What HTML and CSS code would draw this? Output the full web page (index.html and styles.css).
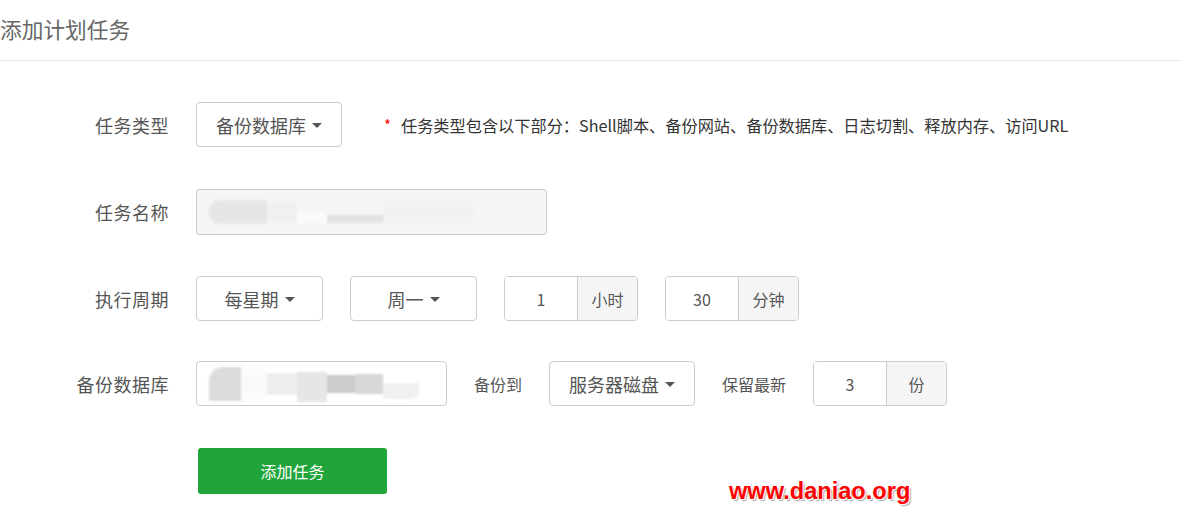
FILE: index.html
```html
<!DOCTYPE html>
<html lang="zh-CN">
<head>
<meta charset="utf-8">
<title>添加计划任务</title>
<link rel="stylesheet" href="styles.css">
</head>
<body>
<div class="page">
  <div class="header"><h1 class="title">添加计划任务</h1></div>
  <div class="form">
    <div class="row">
      <div class="label">任务类型</div>
      <div class="select w146"><span>备份数据库</span><i class="caret"></i></div>
      <div class="hint"><span class="star">*</span><span class="hint-text">任务类型包含以下部分：Shell脚本、备份网站、备份数据库、日志切割、释放内存、访问URL</span></div>
    </div>
    <div class="row">
      <div class="label">任务名称</div>
      <div class="name-input">
        <div class="blur blur-name">
          <span class="b b1"></span><span class="b b2"></span><span class="b b3"></span><span class="b b4"></span><span class="b b5"></span>
        </div>
      </div>
    </div>
    <div class="row row-tight">
      <div class="label">执行周期</div>
      <div class="select w127"><span>每星期</span><i class="caret"></i></div>
      <div class="select w127"><span>周一</span><i class="caret"></i></div>
      <div class="group"><div class="gin">1</div><div class="addon">小时</div></div>
      <div class="group"><div class="gin">30</div><div class="addon">分钟</div></div>
    </div>
    <div class="row">
      <div class="label">备份数据库</div>
      <div class="select w251 dbsel">
        <div class="blur blur-db">
          <span class="d d1"></span><span class="d d2"></span><span class="d d3"></span><span class="d d4"></span><span class="d d5"></span><span class="d d6"></span><span class="d d7"></span>
        </div>
      </div>
      <div class="text">备份到</div>
      <div class="select w146"><span>服务器磁盘</span><i class="caret"></i></div>
      <div class="text">保留最新</div>
      <div class="group"><div class="gin">3</div><div class="addon">份</div></div>
    </div>
    <div class="actions">
      <button class="btn">添加任务</button>
    </div>
  </div>
  <div class="watermark">www.daniao.org</div>
</div>
</body>
</html>
```
FILE: styles.css
```css
html, body {
  margin: 0;
  padding: 0;
  background: #fff;
}
body {
  font-family: "Noto Sans CJK SC", "Microsoft YaHei", sans-serif;
  color: #555;
}
.page {
  position: relative;
  width: 1182px;
  height: 522px;
  overflow: hidden;
}
.header {
  height: 60px;
  border-bottom: 1px solid #e8e8e8;
}
.title {
  margin: 0;
  font-size: 21.7px;
  font-weight: normal;
  line-height: 57px;
  color: #666;
}
.form {
  padding-top: 41px;
}
.row {
  display: flex;
  align-items: center;
  gap: 27px;
  height: 45px;
  margin-bottom: 42px;
}
.row-tight {
  margin-bottom: 40px;
}
.label {
  width: 169px;
  text-align: right;
  font-size: 18px;
  color: #555;
  letter-spacing: 0.5px;
}
.select {
  box-sizing: border-box;
  height: 45px;
  border: 1px solid #ccc;
  border-radius: 4px;
  display: flex;
  align-items: center;
  justify-content: center;
  font-size: 18px;
  color: #555;
  background: #fff;
}
.w146 { width: 146px; }
.w127 { width: 127px; }
.w251 { width: 251px; }
.caret {
  width: 0;
  height: 0;
  border-left: 5px solid transparent;
  border-right: 5px solid transparent;
  border-top: 5px solid #555;
  margin-left: 6px;
  margin-top: 2px;
}
.hint {
  margin-left: 15px;
  display: flex;
  align-items: center;
  font-size: 16.2px;
  color: #333;
}
.star {
  color: #f00;
  font-size: 15px;
  width: 17px;
}
.name-input {
  box-sizing: border-box;
  width: 351px;
  height: 46px;
  border: 1px solid #ccc;
  border-radius: 3px;
  background: #f5f5f5;
  display: flex;
  align-items: center;
  padding-left: 12px;
}
.blur {
  display: flex;
  align-items: center;
  filter: blur(1.2px);
}
.b { display: block; }
.b1 { width: 58px; height: 24px; background: #e6e6e6; border-radius: 10px 0 0 10px; }
.b2 { width: 30px; height: 20px; background: #f0f0f0; }
.b3 { width: 30px; height: 10px; background: #fbfbfb; margin-top: 12px; }
.b4 { width: 56px; height: 8px; background: #e2e2e2; margin-top: 14px; }
.b5 { width: 90px; height: 22px; background: #f1f1f1; }
.dbsel {
  justify-content: flex-start;
  padding-left: 12px;
}
.d { display: block; }
.d1 { width: 32px; height: 34px; background: #dcdcdc; border-radius: 14px 0 0 0; }
.d2 { width: 26px; height: 30px; background: #fafafa; }
.d3 { width: 30px; height: 22px; background: #eeeeee; }
.d4 { width: 30px; height: 30px; background: #e6e6e6; margin-top: 6px; }
.d5 { width: 28px; height: 18px; background: #cccccc; }
.d6 { width: 28px; height: 20px; background: #d8d8d8; }
.d7 { width: 36px; height: 16px; background: #f0f0f0; margin-top: 14px; border-radius: 0 0 8px 0; }
.group {
  box-sizing: border-box;
  width: 134px;
  height: 45px;
  border: 1px solid #ccc;
  border-radius: 4px;
  display: flex;
  overflow: hidden;
  font-size: 16px;
  color: #555;
}
.gin {
  width: 72px;
  display: flex;
  align-items: center;
  justify-content: center;
  background: #fff;
}
.addon {
  flex: 1;
  border-left: 1px solid #ccc;
  background: #f5f5f5;
  display: flex;
  align-items: center;
  justify-content: center;
}
.text {
  font-size: 16px;
  color: #555;
}
.actions {
  padding-left: 198px;
}
.btn {
  width: 189px;
  height: 46px;
  border: none;
  border-radius: 3px;
  background: #20a53a;
  color: #fff;
  font-family: "Noto Sans CJK SC", "Microsoft YaHei", sans-serif;
  font-size: 16px;
  cursor: pointer;
}
.watermark {
  position: absolute;
  left: 729px;
  top: 476px;
  font-family: "Liberation Sans", Arial, sans-serif;
  font-weight: bold;
  font-size: 23.6px;
  line-height: 30px;
  color: #f00;
  text-shadow: 1px 1px 0 #fff, 2px 2px 1px #aaa, -1px -1px 0 #fff;
}
```
